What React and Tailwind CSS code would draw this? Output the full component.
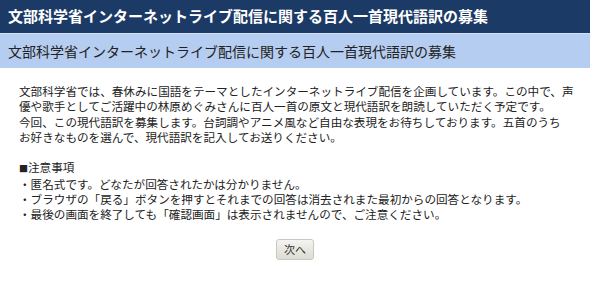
const LEAD = [
  '文部科学省では、春休みに国語をテーマとしたインターネットライブ配信を企画しています。この中で、声',
  '優や歌手としてご活躍中の林原めぐみさんに百人一首の原文と現代語訳を朗読していただく予定です。',
  '今回、この現代語訳を募集します。台詞調やアニメ風など自由な表現をお待ちしております。五首のうち',
  'お好きなものを選んで、現代語訳を記入してお送りください。',
]

const NOTES = [
  '・匿名式です。どなたが回答されたかは分かりません。',
  '・ブラウザの「戻る」ボタンを押すとそれまでの回答は消去されまた最初からの回答となります。',
  '・最後の画面を終了しても「確認画面」は表示されませんので、ご注意ください。',
]

export default function App() {
  const title = '文部科学省インターネットライブ配信に関する百人一首現代語訳の募集'
  return (
    <div className="w-[590px] h-[300px] bg-white font-['Noto_Sans_CJK_JP',sans-serif] overflow-hidden">
      <div className="h-[33px] bg-[#1c3a66] flex items-center pl-[8px] text-white text-[15px] font-bold">
        {title}
      </div>
      <div className="h-[35px] bg-[#b5cdf0] border-t border-[#d6e3f6] flex items-center pl-[8px] text-[#222] text-[14px]">
        {title}
      </div>

      <div className="pl-[19px] pt-[16px] text-[11.6px] leading-[15.3px] text-[#222] whitespace-nowrap">
        {LEAD.map((l) => (
          <div key={l}>{l}</div>
        ))}
        <div className="h-[15.3px]" />
        <div>
          <span className="text-[9px]">■</span>注意事項
        </div>
        {NOTES.map((l) => (
          <div key={l}>{l}</div>
        ))}
      </div>

      <div className="flex justify-center pt-[16px]">
        <button className="w-[38px] h-[21px] rounded-[3px] border border-[#c8c8c0] bg-gradient-to-b from-[#f4f4f0] to-[#dcdcd4] text-[11px] text-[#333] leading-none">
          次へ
        </button>
      </div>
    </div>
  )
}
